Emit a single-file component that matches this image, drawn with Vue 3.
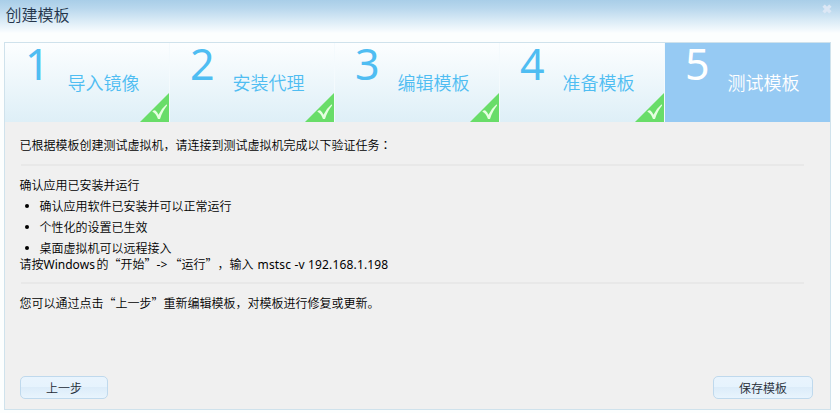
<script setup>
const steps = ['导入镜像', '安装代理', '编辑模板', '准备模板', '测试模板']
const current = 4
const checks = ['确认应用软件已安装并可以正常运行', '个性化的设置已生效', '桌面虚拟机可以远程接入']
</script>

<template>
  <div class="dialog">
    <header class="titlebar">
      <h1>创建模板</h1>
      <svg class="close" width="10" height="10" viewBox="0 0 10 10">
        <path d="M1.6 1.6L8.4 8.4M8.4 1.6L1.6 8.4" />
      </svg>
    </header>
    <main class="panel">
      <nav class="steps">
        <div v-for="(name, i) in steps" :key="name" class="step" :class="{ active: i === current }">
          <span class="num">{{ i + 1 }}</span>
          <span class="name">{{ name }}</span>
          <svg v-if="i < current" class="done" width="29" height="29" viewBox="0 0 29 29">
            <path d="M29 0V29H0Z" fill="#69dd69" />
            <path d="M12.3 18.6Q14.3 16.6 15.4 17.4Q17.2 18.7 18.5 21.8Q21.5 15.5 26.6 11.3L27.1 12.6Q22.7 17.7 20 26H18Q16 20.5 12.3 18.6Z" fill="#e6ffe0" />
          </svg>
        </div>
      </nav>
      <section class="body">
        <p class="line">已根据模板创建测试虚拟机，请连接到测试虚拟机完成以下验证任务<span class="colon">：</span></p>
        <hr>
        <p class="line">确认应用已安装并运行</p>
        <ul>
          <li v-for="c in checks" :key="c">{{ c }}</li>
        </ul>
        <p class="line command">请按<span class="latin win">Windows</span>的“开始”<span class="latin arrow">-&gt;</span>“运行”，输入<span class="latin cmd">mstsc -v 192.168.1.198</span></p>
        <hr>
        <p class="line">您可以通过点击“上一步”重新编辑模板，对模板进行修复或更新。</p>
      </section>
      <footer class="actions">
        <button class="prev">上一步</button>
        <button class="save">保存模板</button>
      </footer>
    </main>
  </div>
</template>

<style>
body { margin: 0; }
</style>

<style scoped>
.dialog {
  box-sizing: border-box;
  width: 840px;
  height: 413px;
  background: #fcfefe;
  font-family: "Noto Sans CJK SC", sans-serif;
  font-size: 12px;
  font-weight: 350;
  font-kerning: none;
  text-spacing-trim: space-all;
  color: #000;
}
.titlebar {
  display: flex;
  justify-content: space-between;
  box-sizing: border-box;
  height: 42px;
  padding: 0 8px 0 5.5px;
  background: linear-gradient(#a9cee8 0, #b8d7ed 8px, #f8fcfe 32px, #fcfefe 33px);
}
h1 {
  margin: 0;
  font-size: 16px;
  line-height: 28px;
  font-weight: 350;
  color: #23344a;
}
.close { margin-top: 4px; }
.close path { stroke: #dce7f5; stroke-width: 3.4; fill: none; }
.panel {
  display: flex;
  flex-direction: column;
  box-sizing: border-box;
  width: 827px;
  height: 368px;
  margin-left: 4px;
  border: 1px solid #cfe2ec;
  background: #f0f0f0;
}
.steps { display: flex; height: 79px; }
.step {
  position: relative;
  display: flex;
  box-sizing: border-box;
  width: 165px;
  padding-left: 20px;
  background: linear-gradient(#fcfeff, #deeff7);
  color: #4fbdf2;
}
.step:not(.active) { border-right: 1px solid #f4fafd; }
.step.active { background: #96caf3; color: #fff; }
.num {
  width: 42.5px;
  font-family: "Noto Sans", sans-serif;
  font-size: 43px;
  line-height: 41px;
  font-weight: 400;
}
.name {
  font-size: 18px;
  line-height: 24px;
  margin-top: 27px;
  font-weight: 350;
  white-space: nowrap;
}
.done { position: absolute; right: 0; bottom: 0; }
.body { flex: 1; padding: 13px 26px 0 14.5px; }
.line { margin: 0; line-height: 20px; white-space: nowrap; }
.colon { font-family: "Noto Sans CJK TC", sans-serif; }
hr { height: 2px; margin: 9px 0 9px 1px; border: 0; background: #e8e8e8; }
ul { margin: -2px 0 0; padding-left: 5px; list-style: none; }
li { display: flex; align-items: center; gap: 11px; padding-top: 5px; line-height: 16px; }
li::before { content: ""; width: 4px; height: 4px; border-radius: 50%; background: #000; }
.command { line-height: 16px; margin-bottom: 9px; }
.latin { display: inline-block; font-family: "Noto Sans", sans-serif; font-weight: 400; line-height: 16px; }
.win { width: 53px; }
.arrow { width: 13px; }
.cmd { margin-left: 4px; letter-spacing: 0.16px; }
.actions { display: flex; justify-content: space-between; padding: 0 17px 10px 15px; }
button {
  box-sizing: border-box;
  height: 23px;
  padding: 0;
  border: 1px solid #bfd9ed;
  border-radius: 5px;
  background: linear-gradient(#e9f4fd 0, #e6f3fd 48%, #dcecf9 49%, #e8f4fd 100%);
  font: inherit;
  line-height: 21px;
  color: #1d2a35;
}
.prev { width: 88px; }
.save { width: 100px; }
</style>
